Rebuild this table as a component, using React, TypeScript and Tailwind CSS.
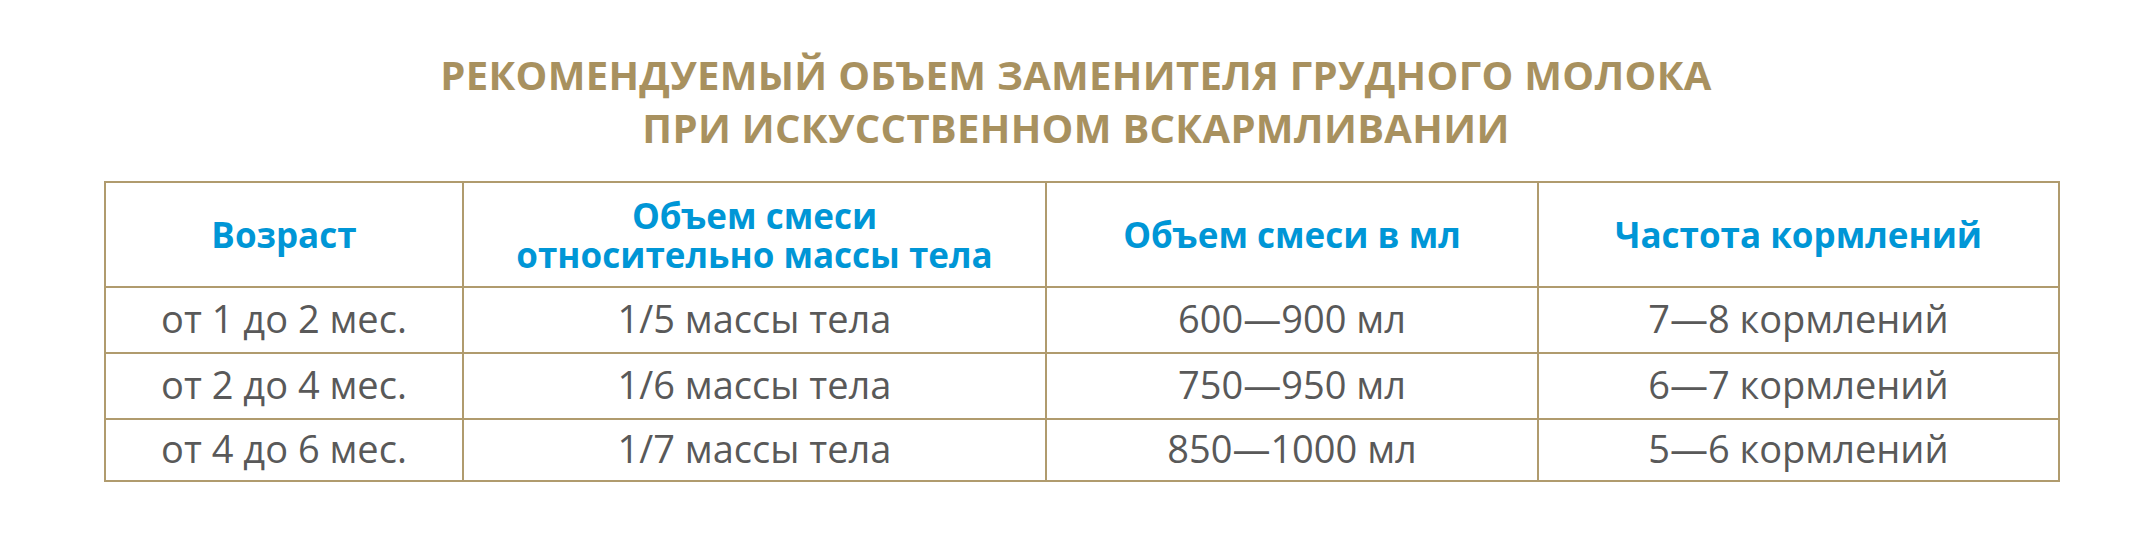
import React from "react";

const GOLD = "text-[#a8915f]";

type CellProps = {
  children: React.ReactNode;
  last?: boolean;
  bottom?: boolean;
  head?: boolean;
};

function Cell({ children, last, bottom, head }: CellProps) {
  return (
    <div
      className={[
        "flex items-center justify-center text-center",
        last ? "" : "border-r-2 border-[#b09b6e]",
        bottom ? "border-b-2 border-[#b09b6e]" : "",
        head
          ? "font-bold text-[35px] leading-[39px] text-[#0096d6]"
          : "pb-[5px] text-[38px] leading-[52px] text-[#595959]",
      ].join(" ")}
    >
      {children}
    </div>
  );
}

const rows = [
  ["от 1 до 2 мес.", "1/5 массы тела", "600—900 мл", "7—8 кормлений"],
  ["от 2 до 4 мес.", "1/6 массы тела", "750—950 мл", "6—7 кормлений"],
  ["от 4 до 6 мес.", "1/7 массы тела", "850—1000 мл", "5—6 кормлений"],
];

export default function App() {
  return (
    <div
      className="w-[2152px] h-[536px] bg-white overflow-hidden"
      style={{ fontFamily: '"Open Sans", "Noto Sans", sans-serif' }}
    >
      <div className={`pt-[48px] text-center font-bold text-[40px] leading-[53px] tracking-[0.3px] ${GOLD}`}>
        <div>РЕКОМЕНДУЕМЫЙ ОБЪЕМ ЗАМЕНИТЕЛЯ ГРУДНОГО МОЛОКА</div>
        <div>ПРИ ИСКУССТВЕННОМ ВСКАРМЛИВАНИИ</div>
      </div>
      <div className="ml-[104px] mt-[27px] w-[1956px] border-2 border-[#b09b6e] grid grid-cols-[358px_583px_492px_519px] grid-rows-[105px_66px_66px_60px]">
        <Cell head bottom>Возраст</Cell>
        <Cell head bottom>
          <div>
            Объем смеси
            <br />
            относительно массы тела
          </div>
        </Cell>
        <Cell head bottom>Объем смеси в мл</Cell>
        <Cell head bottom last>Частота кормлений</Cell>
        {rows.map((r, i) =>
          r.map((c, j) => (
            <Cell key={`${i}-${j}`} bottom={i < rows.length - 1} last={j === 3}>
              {c}
            </Cell>
          ))
        )}
      </div>
    </div>
  );
}
